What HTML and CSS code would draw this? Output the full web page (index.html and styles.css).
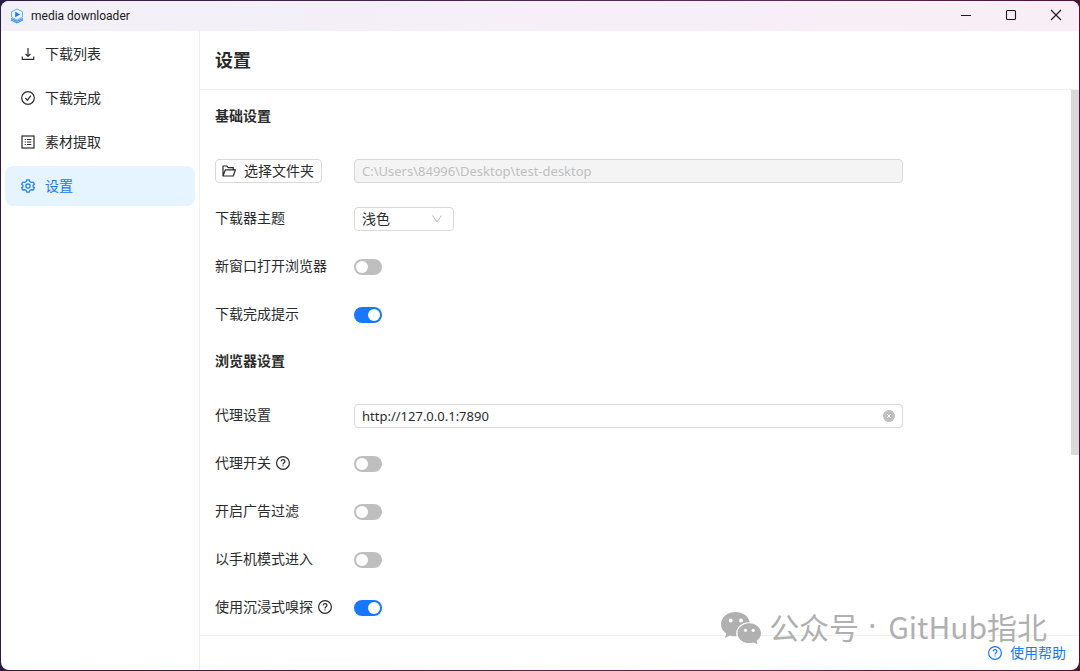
FILE: index.html
```html
<!DOCTYPE html>
<html lang="zh-CN">
<head>
<meta charset="utf-8">
<meta name="viewport" content="width=device-width, initial-scale=1">
<title>media downloader</title>
<link rel="stylesheet" href="styles.css">
</head>
<body>
<div class="window">
  <header class="titlebar">
    <svg class="app-logo" viewBox="0 0 14 16" width="14" height="16" fill="none" stroke="#3d94f6">
      <path d="M7 1 12.500 3.800V9.200L7 12 1.500 9.200V3.800Z" fill="#e8f4ff" stroke="#62b0fb"/>
      <path d="M5.200 3.800 10 6.500 5.200 9.200Z" fill="#1677ff" stroke="none"/>
      <path d="M1 10.500 7 13.300 13 10.500M1 12 7 15 13 12" stroke-width="1.100"/>
    </svg>
    <span class="app-name">media downloader</span>
    <div class="window-buttons">
      <button type="button" aria-label="最小化"><svg viewBox="0 0 12 12" width="12" height="12"><path d="M1 6.500H11"/></svg></button>
      <button type="button" aria-label="最大化"><svg viewBox="0 0 12 12" width="12" height="12"><rect x="1.500" y="1.500" width="9" height="9" rx="1"/></svg></button>
      <button type="button" aria-label="关闭"><svg viewBox="0 0 12 12" width="12" height="12"><path d="M1 1 11 11M11 1 1 11"/></svg></button>
    </div>
  </header>

  <div class="layout">
    <nav class="sidebar">
      <a class="menu-item" href="#list">
        <svg class="icon" viewBox="0 0 14 14"><path d="M7 1V9M4.500 6.800 7 9.300 9.500 6.800M1.300 9.500V12.400H12.700V9.500"/></svg>
        <span>下载列表</span>
      </a>
      <a class="menu-item" href="#done">
        <svg class="icon" viewBox="0 0 14 14"><circle cx="7" cy="7" r="6.300"/><path d="M4.300 6.800 6.400 9.200 9.900 4.600"/></svg>
        <span>下载完成</span>
      </a>
      <a class="menu-item" href="#extract">
        <svg class="icon" viewBox="0 0 14 14"><rect x="1" y="1" width="12" height="12"/><path d="M6 4.500H10.300M6 7H10.300M6 9.500H10.300M3.700 4.500H4.900M3.700 7H4.900M3.700 9.500H4.900"/></svg>
        <span>素材提取</span>
      </a>
      <a class="menu-item active" href="#settings" aria-current="page">
        <svg class="icon" viewBox="0 0 14 14"><path d="M5.700.8H8.300L8.800 2.600 10.300 3.500 12.100 3 13.400 5.300 12.100 6.500V7.700L13.400 8.800 12.100 11.100 10.300 10.600 8.800 11.500 8.300 13.200H5.700L5.200 11.500 3.700 10.600 1.900 11.100.6 8.800 1.900 7.700V6.400L.6 5.300 1.900 3 3.700 3.500 5.200 2.600Z" stroke-linejoin="round"/><circle cx="7" cy="7" r="2.100"/></svg>
        <span>设置</span>
      </a>
    </nav>

    <main class="page">
      <div class="page-header"><h1>设置</h1></div>

      <div class="page-body">
        <form class="settings">
          <h2>基础设置</h2>
          <div class="row">
            <button class="folder-button" type="button">
              <svg class="icon" viewBox="0 0 14 14"><path d="M1 12V2H4.800L6.300 3.700H11.300V5.800M1 12H11.300L13.400 5.800H3.400L1 12Z" stroke-linejoin="round"/></svg>
              <span>选择文件夹</span>
            </button>
            <input class="text-input" type="text" aria-label="选择文件夹" value="C:\Users\84996\Desktop\test-desktop" disabled>
          </div>
          <div class="row">
            <label for="theme">下载器主题</label>
            <div class="select-box">
              <select id="theme"><option>浅色</option><option>深色</option></select>
              <svg class="arrow" viewBox="0 0 12 12" width="12" height="12"><path d="M1.500 2.500 6 9 10.500 2.500"/></svg>
            </div>
          </div>
          <div class="row">
            <label for="new-window">新窗口打开浏览器</label>
            <input class="switch" id="new-window" type="checkbox" role="switch">
          </div>
          <div class="row">
            <label for="notify">下载完成提示</label>
            <input class="switch" id="notify" type="checkbox" role="switch" checked>
          </div>

          <h2>浏览器设置</h2>
          <div class="row">
            <label for="proxy">代理设置</label>
            <div class="clearable">
              <input class="text-input" id="proxy" type="text" value="http://127.0.0.1:7890">
              <button class="clear" type="button" aria-label="清除"><svg viewBox="0 0 12 12" width="12" height="12"><circle cx="6" cy="6" r="6" fill="#bfbfbf"/><path d="M4 4 8 8M8 4 4 8" stroke="#fff"/></svg></button>
            </div>
          </div>
          <div class="row">
            <label for="proxy-on">代理开关
              <svg class="icon" viewBox="0 0 14 14"><circle cx="7" cy="7" r="6.400"/><path d="M5.100 5.600C5.100 3 8.900 3 8.900 5.400 8.900 6.800 7 6.700 7 8.400M7 9.400V10.500"/></svg>
            </label>
            <input class="switch" id="proxy-on" type="checkbox" role="switch">
          </div>
          <div class="row">
            <label for="adblock">开启广告过滤</label>
            <input class="switch" id="adblock" type="checkbox" role="switch">
          </div>
          <div class="row">
            <label for="mobile">以手机模式进入</label>
            <input class="switch" id="mobile" type="checkbox" role="switch">
          </div>
          <div class="row">
            <label for="sniff">使用沉浸式嗅探
              <svg class="icon" viewBox="0 0 14 14"><circle cx="7" cy="7" r="6.400"/><path d="M5.100 5.600C5.100 3 8.900 3 8.900 5.400 8.900 6.800 7 6.700 7 8.400M7 9.400V10.500"/></svg>
            </label>
            <input class="switch" id="sniff" type="checkbox" role="switch" checked>
          </div>
        </form>
        <div class="scrollbar"></div>
      </div>

      <footer class="page-footer">
        <a class="help" href="#help">
          <svg class="icon" viewBox="0 0 14 14"><circle cx="7" cy="7" r="6.400"/><path d="M5.100 5.600C5.100 3 8.900 3 8.900 5.400 8.900 6.800 7 6.700 7 8.400M7 9.400V10.500"/></svg>
          <span>使用帮助</span>
        </a>
      </footer>
    </main>
  </div>

  <div class="watermark">
    <svg viewBox="0 0 40 33" width="40" height="33">
      <path fill="#b0b0b0" d="M14.500 0C6.500 0 0 5.400 0 12.200 0 16 2 19.300 5.300 21.500L4 26 9 23.400C11 24 13 24.400 15.500 24.300 13.500 16.500 20 10 28.800 10.200 27.500 4.200 21.500 0 14.500 0Z"/>
      <path fill="#b0b0b0" d="M28.300 11.300C21.800 11.300 16.500 15.700 16.500 21.200S21.800 31.100 28.300 31.100C29.900 31.100 31.400 30.800 32.800 30.400L36.600 32.500 35.600 28.800C38.300 27 40 24.200 40 21.200 40 15.700 34.800 11.300 28.300 11.300Z"/>
      <g fill="#fff"><circle cx="9.700" cy="8.500" r="1.900"/><circle cx="20" cy="8.500" r="1.900"/><circle cx="24.500" cy="18.300" r="1.600"/><circle cx="32.200" cy="18.300" r="1.600"/></g>
    </svg>
    <span>公众号</span><span class="dot">·</span><span>GitHub指北</span>
  </div>
</div>
</body>
</html>
```
FILE: styles.css
```css
* {
  box-sizing: border-box;
}

body {
  margin: 0;
  height: 100vh;
  padding: 1px;
  background: linear-gradient(90deg, #2c1c42, #5a2a5c 70%, #4a1530);
  color: #2b2b2b;
  font: 14px/22px "Noto Sans", "Noto Sans CJK SC", sans-serif;
}

button,
input,
select {
  font: inherit;
  color: inherit;
}

a {
  color: inherit;
  text-decoration: none;
}

svg {
  flex: none;
}

.icon {
  width: 14px;
  height: 14px;
  fill: none;
  stroke: currentColor;
  stroke-width: 1.2;
}

.window {
  position: relative;
  display: flex;
  flex-direction: column;
  height: 100%;
  overflow: hidden;
  border-radius: 8px;
  background: #fff;
}

.titlebar {
  display: flex;
  align-items: center;
  flex: none;
  height: 30px;
  padding: 0 1px 0 9px;
  background: linear-gradient(90deg, #f2f0f8, #f9eef6);
}

.app-name {
  margin-left: 7px;
  font: 12px/16px Roboto, sans-serif;
  color: #1a1a1a;
}

.window-buttons {
  display: flex;
  align-self: stretch;
  margin-left: auto;
}

.window-buttons button {
  display: grid;
  place-items: center;
  width: 45px;
  padding: 0 0 2px;
  border: 0;
  background: none;
}

.window-buttons svg {
  fill: none;
  stroke: #1a1a1a;
  stroke-width: 1.1;
}

.layout {
  display: flex;
  flex: 1;
  min-height: 0;
}

.sidebar {
  display: flex;
  flex-direction: column;
  gap: 4px;
  flex: none;
  width: 199px;
  padding: 3px 4px;
  border-right: 1px solid #f0f0f0;
}

.menu-item {
  display: flex;
  align-items: center;
  gap: 10px;
  height: 40px;
  padding: 0 16px;
  border-radius: 8px;
}

.menu-item.active {
  background: #e6f4ff;
  color: #1677ff;
}

.page {
  display: flex;
  flex-direction: column;
  flex: 1;
  min-width: 0;
}

.page-header {
  display: flex;
  align-items: center;
  flex: none;
  height: 59px;
  padding: 0 15px;
  border-bottom: 1px solid #f0f0f0;
}

h1,
h2 {
  margin: 0;
  font-weight: 700;
}

h1 {
  font-size: 18px;
  line-height: 28px;
}

h2 {
  font-size: 14px;
  line-height: 20px;
}

.page-body {
  position: relative;
  flex: 1;
  min-height: 0;
  overflow: hidden;
}

.settings {
  padding: 16px 20% 0 15px;
}

.settings h2 {
  margin-bottom: 33px;
}

.row {
  display: grid;
  grid-template-columns: 139px 1fr;
  align-items: center;
  height: 24px;
  margin-bottom: 24px;
}

.row label {
  display: flex;
  align-items: center;
  gap: 5px;
  padding-bottom: 2px;
}

.folder-button {
  display: flex;
  align-items: center;
  justify-self: start;
  gap: 8px;
  height: 24px;
  padding: 0 7px 0 6px;
  border: 1px solid #d9d9d9;
  border-radius: 4px;
  background: #fff;
}

.text-input {
  width: 100%;
  height: 24px;
  padding: 0 7px;
  border: 1px solid #d9d9d9;
  border-radius: 4px;
  background: #fff;
  font-family: "Noto Sans", sans-serif;
  font-size: 13px;
}

.text-input:disabled {
  background: #f4f4f4;
  color: #bfbfbf;
}

.select-box {
  position: relative;
  width: 100px;
  height: 24px;
}

.select-box select {
  width: 100%;
  height: 100%;
  padding: 0 7px;
  border: 1px solid #d9d9d9;
  border-radius: 4px;
  background: #fff;
  line-height: 22px;
  appearance: none;
}

.arrow {
  position: absolute;
  top: 6px;
  right: 11px;
  fill: none;
  stroke: #bfbfbf;
  pointer-events: none;
}

.clearable {
  position: relative;
  height: 24px;
}

.clear {
  position: absolute;
  top: 6px;
  right: 8px;
  display: flex;
  padding: 0;
  border: 0;
  background: none;
}

.switch {
  display: flex;
  align-items: center;
  width: 28px;
  height: 16px;
  margin: 0;
  padding: 0 2px;
  border-radius: 8px;
  background: #bfbfbf;
  appearance: none;
}

.switch::before {
  content: "";
  width: 12px;
  height: 12px;
  border-radius: 50%;
  background: #fff;
}

.switch:checked {
  justify-content: flex-end;
  background: #1677ff;
}

.scrollbar {
  position: absolute;
  top: 0;
  right: 0;
  width: 8px;
  height: 67%;
  background: #d9d9d9;
}

.page-footer {
  display: flex;
  align-items: center;
  justify-content: flex-end;
  flex: none;
  height: 35px;
  padding: 0 13px;
  border-top: 1px solid #f0f0f0;
}

.help {
  display: flex;
  align-items: center;
  gap: 8px;
  color: #1677ff;
}

.watermark {
  position: absolute;
  right: 32px;
  bottom: 24px;
  display: flex;
  align-items: center;
  color: #b0b0b0;
  font: 30px/32px "Noto Sans CJK SC", sans-serif;
  pointer-events: none;
}

.watermark span {
  padding-bottom: 4px;
}

.watermark svg {
  margin-right: 8px;
}

.watermark .dot {
  margin: 0 12px 0 9px;
  font-family: "Noto Sans", sans-serif;
}
```
